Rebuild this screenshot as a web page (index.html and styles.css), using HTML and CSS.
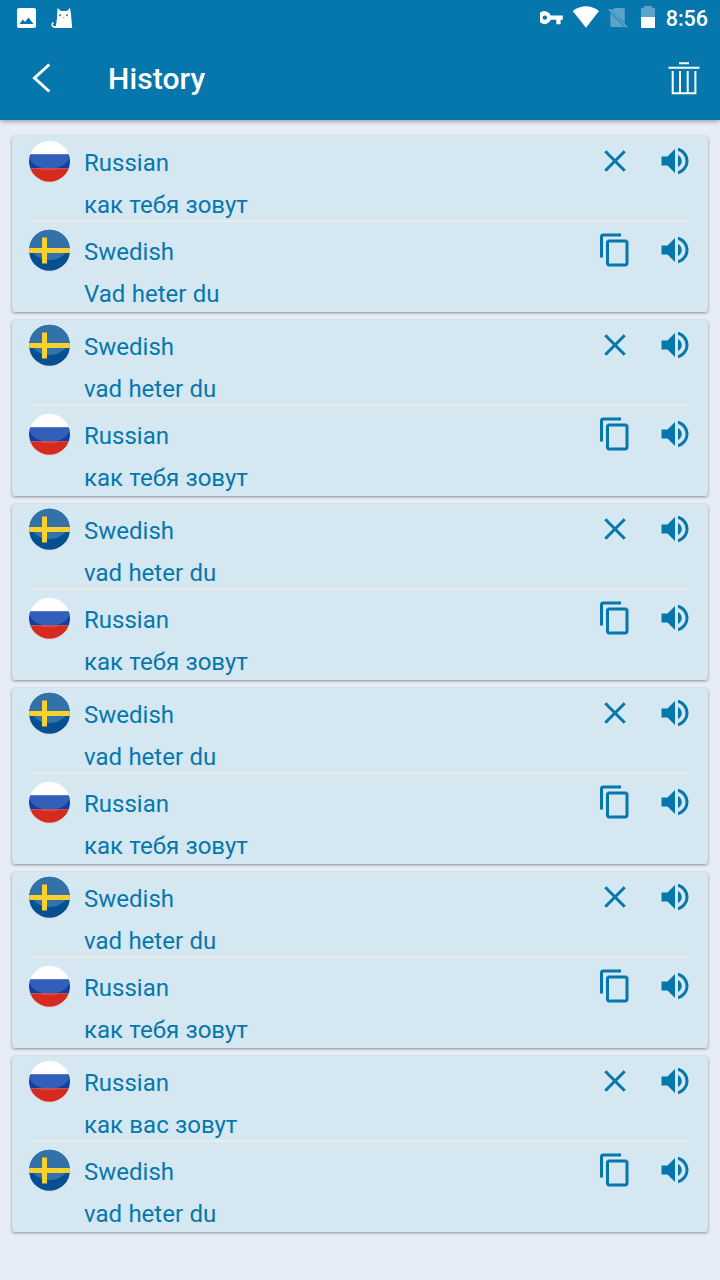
FILE: index.html
```html
<!DOCTYPE html>
<html lang="en">
<head>
<meta charset="utf-8">
<title>History</title>
<link rel="stylesheet" href="styles.css">
</head>
<body>
<svg class="defs" aria-hidden="true">
  <defs>
    <clipPath id="disc"><circle cx="21.500" cy="22.300" r="20.5"/></clipPath>
    <symbol id="ru" viewBox="0 0 44 44">
      <circle cx="21.500" cy="23.100" r="20.8" fill="#c3d0da"/>
      <circle cx="21.500" cy="22.700" r="20.9" fill="#e6edf2"/>
      <g clip-path="url(#disc)">
        <rect width="44" height="16" fill="#fff"/>
        <rect y="15.5" width="44" height="14" fill="#103f9f"/>
        <rect y="29.500" width="44" height="15" fill="#d62a1e"/>
        <path d="M1 15.500h41C41 25 33 29.500 21.500 29.500S2 25 1 15.500z" fill="#315fb9"/>
        <path d="M10 29.500h23q-5 2-11.500 2t-11.500-2z" fill="#de4a43"/>
      </g>
    </symbol>
    <symbol id="se" viewBox="0 0 44 44">
      <circle cx="21.500" cy="23.100" r="20.8" fill="#c3d0da"/>
      <circle cx="21.500" cy="22.700" r="20.9" fill="#e6edf2"/>
      <g clip-path="url(#disc)">
        <rect width="44" height="44" fill="#064f93"/>
        <ellipse cx="21.500" cy="15" rx="20" ry="17" fill="#3272a8"/>
        <path d="M14 9.500h5v10.500H43v5H19V35.500h-5V25H0v-5h14z" fill="#f8d12e"/>
      </g>
    </symbol>
    <symbol id="close" viewBox="0 0 36 36">
      <path d="M8.300 8.300l19.400 19.400M27.700 8.300L8.300 27.700" fill="none" stroke="currentColor" stroke-width="3"/>
    </symbol>
    <symbol id="copy" viewBox="0 0 24 24">
      <path fill="currentColor" d="M16 1H4c-1.100 0-2 .9-2 2v14h2V3h12V1zm3 4H8c-1.100 0-2 .9-2 2v14c0 1.100.9 2 2 2h11c1.100 0 2-.9 2-2V7c0-1.100-.9-2-2-2zm0 16H8V7h11v14z"/>
    </symbol>
    <symbol id="volume" viewBox="0 0 24 24">
      <path fill="currentColor" d="M3 9v6h4l5 5V4L7 9H3zm13.500 3c0-1.770-1.020-3.290-2.500-4.030v8.050c1.480-.73 2.500-2.250 2.500-4.020zM14 3.230v2.060c2.890.86 5 3.540 5 6.710s-2.110 5.850-5 6.710v2.060c4.010-.91 7-4.490 7-8.770s-2.990-7.860-7-8.770z"/>
    </symbol>
  </defs>
</svg>

<header class="header">
  <div class="status">
    <svg class="status-left" width="60" height="24" viewBox="0 0 60 24">
      <path fill="#fff" fill-rule="evenodd" d="M3 2h15q2 0 2 2v16q0 2-2 2H3q-2 0-2-2V4q0-2 2-2zM3.500 18h14l-5-6.500-3.500 4.500-2.300-2.500z"/>
      <path fill="#fff" fill-rule="evenodd" d="M41.500 2l3.500 3h6l3-3 1 6 1.200 14H41q-5.500.3-5.700-3.500 0-2.500 2.400-2.500v1.600q-1.200 0-.9 1.300.5 1.500 3.200.9l1-8zM44 8.300a.9.900 0 1 0 .1 0zM51 8.300a.9.900 0 1 0 .1 0z"/>
      <path fill="#0677ad" d="M47 11.300h1.600l-.8.9z"/>
    </svg>
    <div class="status-right">
      <svg width="122" height="28" viewBox="0 0 122 28">
        <path fill="#fff" fill-rule="evenodd" transform="translate(-1.200 4.200)" d="M12 15.500a6.500 6.500 0 1 1 0-4.200h12v4.200h-2.200v4.500h-4.300v-4.500zM6 11.200a2.200 2.200 0 1 0 .1 0z"/>
        <path fill="#fff" d="M32.700 11Q46 1.700 59 11L46 27.700z"/>
        <g fill="#5ba3c9">
          <path d="M75.500 8h8q1.300 0 1.300 1.300V23L70.800 9.800zM70.300 12.800L84.300 27H72q-1.700 0-1.700-1.700z"/>
          <path d="M68.300 9.800l1.300-1.300 18 18.300-1.400 1.300z"/>
          <path d="M112.200 6v2h2.800v9h-14V8h2.700V6z"/>
        </g>
        <path fill="#fff" d="M101 17h14v11h-14z"/>
      </svg>
      <span class="time">8:56</span>
    </div>
  </div>
  <div class="toolbar">
    <svg class="back" width="20" height="32" viewBox="0 0 20 32">
      <path d="M17.300 2.500L2.500 16l14.800 13.500" fill="none" stroke="#fff" stroke-width="3"/>
    </svg>
    <h1 class="title">History</h1>
    <svg class="trash" width="34" height="36" viewBox="0 0 34 36">
      <path d="M12 3.200h10M1.500 7.700h31M5.700 11v22.200h22.700V11M13 11v22M20.700 11v22" fill="none" stroke="#fff" stroke-width="2"/>
    </svg>
  </div>
</header>

<main class="list">
  <article class="card">
    <section class="entry">
      <svg class="flag"><use href="#ru"/></svg>
      <div class="text"><p>Russian</p><p>как тебя зовут</p></div>
      <svg class="icon"><use href="#close"/></svg><svg class="icon"><use href="#volume"/></svg>
    </section>
    <hr class="divider">
    <section class="entry">
      <svg class="flag"><use href="#se"/></svg>
      <div class="text"><p>Swedish</p><p>Vad heter du</p></div>
      <svg class="icon"><use href="#copy"/></svg><svg class="icon"><use href="#volume"/></svg>
    </section>
  </article>
  <article class="card">
    <section class="entry">
      <svg class="flag"><use href="#se"/></svg>
      <div class="text"><p>Swedish</p><p>vad heter du</p></div>
      <svg class="icon"><use href="#close"/></svg><svg class="icon"><use href="#volume"/></svg>
    </section>
    <hr class="divider">
    <section class="entry">
      <svg class="flag"><use href="#ru"/></svg>
      <div class="text"><p>Russian</p><p>как тебя зовут</p></div>
      <svg class="icon"><use href="#copy"/></svg><svg class="icon"><use href="#volume"/></svg>
    </section>
  </article>
  <article class="card">
    <section class="entry">
      <svg class="flag"><use href="#se"/></svg>
      <div class="text"><p>Swedish</p><p>vad heter du</p></div>
      <svg class="icon"><use href="#close"/></svg><svg class="icon"><use href="#volume"/></svg>
    </section>
    <hr class="divider">
    <section class="entry">
      <svg class="flag"><use href="#ru"/></svg>
      <div class="text"><p>Russian</p><p>как тебя зовут</p></div>
      <svg class="icon"><use href="#copy"/></svg><svg class="icon"><use href="#volume"/></svg>
    </section>
  </article>
  <article class="card">
    <section class="entry">
      <svg class="flag"><use href="#se"/></svg>
      <div class="text"><p>Swedish</p><p>vad heter du</p></div>
      <svg class="icon"><use href="#close"/></svg><svg class="icon"><use href="#volume"/></svg>
    </section>
    <hr class="divider">
    <section class="entry">
      <svg class="flag"><use href="#ru"/></svg>
      <div class="text"><p>Russian</p><p>как тебя зовут</p></div>
      <svg class="icon"><use href="#copy"/></svg><svg class="icon"><use href="#volume"/></svg>
    </section>
  </article>
  <article class="card">
    <section class="entry">
      <svg class="flag"><use href="#se"/></svg>
      <div class="text"><p>Swedish</p><p>vad heter du</p></div>
      <svg class="icon"><use href="#close"/></svg><svg class="icon"><use href="#volume"/></svg>
    </section>
    <hr class="divider">
    <section class="entry">
      <svg class="flag"><use href="#ru"/></svg>
      <div class="text"><p>Russian</p><p>как тебя зовут</p></div>
      <svg class="icon"><use href="#copy"/></svg><svg class="icon"><use href="#volume"/></svg>
    </section>
  </article>
  <article class="card">
    <section class="entry">
      <svg class="flag"><use href="#ru"/></svg>
      <div class="text"><p>Russian</p><p>как вас зовут</p></div>
      <svg class="icon"><use href="#close"/></svg><svg class="icon"><use href="#volume"/></svg>
    </section>
    <hr class="divider">
    <section class="entry">
      <svg class="flag"><use href="#se"/></svg>
      <div class="text"><p>Swedish</p><p>vad heter du</p></div>
      <svg class="icon"><use href="#copy"/></svg><svg class="icon"><use href="#volume"/></svg>
    </section>
  </article>
</main>
</body>
</html>
```

FILE: styles.css
```css
* {
  box-sizing: border-box;
}

body {
  margin: 0;
  min-height: 1280px;
  background: #e6edf7;
  font-family: Roboto, "Noto Sans", sans-serif;
  color: #0677ad;
}

svg {
  display: block;
  flex: none;
}

.defs {
  position: absolute;
  width: 0;
  height: 0;
}

.header {
  height: 120px;
  background: #0677ad;
  color: #fff;
  box-shadow: 0 1px 5px rgba(0, 0, 0, 0.4);
}

.status {
  height: 38px;
  display: flex;
  justify-content: space-between;
  align-items: flex-start;
  padding: 0 12px 0 16px;
}

.status-left {
  margin-top: 6px;
}

.status-right {
  display: flex;
  gap: 4px;
}

.time {
  font-size: 21.5px;
  font-weight: 500;
  line-height: 38px;
}

.toolbar {
  height: 80px;
  display: flex;
  align-items: center;
  padding: 0 19px 0 32px;
}

.title {
  flex: 1;
  margin: 2px 0 0 56px;
  font-size: 30px;
  font-weight: 500;
  line-height: 40px;
  letter-spacing: 0.1px;
}

.list {
  display: flex;
  flex-direction: column;
  gap: 8px;
  padding: 16px 12px 0;
}

.card {
  height: 176px;
  border-radius: 3px;
  background: #d5e7f1;
  box-shadow: 0 1px 3px rgba(0, 0, 0, 0.4);
}

.entry {
  height: 84px;
  display: flex;
  align-items: flex-start;
  padding: 0 15px 0 16px;
}

.divider {
  height: 2px;
  margin: 0 18px 3px;
  border: 0;
  background: #e8ecef;
}

.flag {
  width: 44px;
  height: 44px;
  margin-top: 3px;
}

.text {
  flex: 1;
  padding: 6px 0 0 12px;
}

.text p {
  margin: 0;
  font-size: 24px;
  line-height: 42px;
  word-spacing: 0.4px;
}

.icon {
  width: 36px;
  height: 36px;
  margin: 7px 0 0 24px;
}
```
